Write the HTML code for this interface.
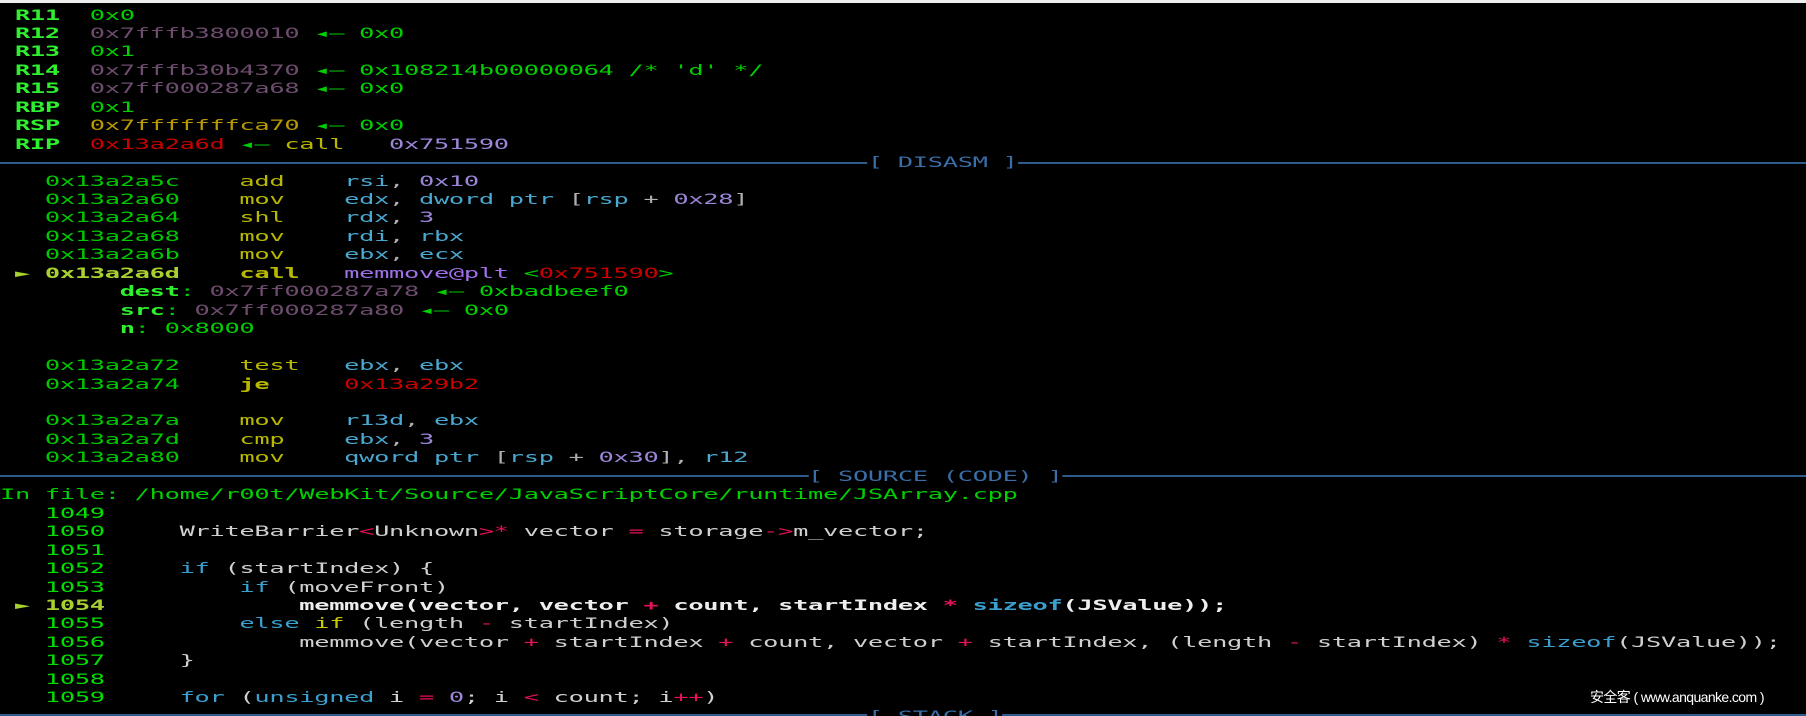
<!DOCTYPE html>
<html><head><meta charset="utf-8"><style>
html,body{margin:0;padding:0;background:#000;width:1806px;height:716px;overflow:hidden;position:relative}
#top{position:absolute;left:0;top:0;width:1806px;height:3px;background:#eeeeee}
.wrap{position:absolute;left:0;top:6.5px;transform:scaleX(1.7735);transform-origin:0 0}
pre{margin:0;font-family:"DejaVu Sans Mono","Liberation Mono",monospace;font-size:14.3px;line-height:18.45px;color:#d0d0d0;white-space:pre;letter-spacing:-0.17px}
.hl{position:absolute;left:0;width:1806px;height:2px;background:#2d5b8c}
.lbl{color:#3a6ea8;background:#000}
b{font-weight:bold}
.rn{color:#2ef02e;font-weight:bold}
.g{color:#00d000}
.pg{color:#6e4c6e}
.y{color:#b89a00}
.r{color:#c80000}
.ol{color:#b8b800}
.pu{color:#9d86d8}
.mp{color:#a070e8}
.bl{color:#4aa8d0}
.gr{color:#b0b0b0}
.ln{color:#00e000}
.ln2{color:#a8d030}
.op{color:#e8105a}
.kw{color:#3aa0d0}
.ky{color:#c8c800}
.ba{color:#00c800}
#wm{position:absolute;left:1590px;top:687px;color:#fff;font-family:"Liberation Sans","Noto Sans CJK SC",sans-serif;font-size:14px;letter-spacing:-0.6px;white-space:nowrap}
</style></head><body>
<div id="top"></div>
<div class="hl" style="top:162px"></div>
<div class="hl" style="top:475px"></div>
<div class="hl" style="top:714px"></div>
<div class="wrap"><pre>
 <span class="rn">R11</span>  <span class="g">0x0</span>
 <span class="rn">R12</span>  <span class="pg">0x7fffb3800010</span> <span class="g">◂— 0x0</span>
 <span class="rn">R13</span>  <span class="g">0x1</span>
 <span class="rn">R14</span>  <span class="pg">0x7fffb30b4370</span> <span class="g">◂— 0x108214b00000064 /* 'd' */</span>
 <span class="rn">R15</span>  <span class="pg">0x7ff000287a68</span> <span class="g">◂— 0x0</span>
 <span class="rn">RBP</span>  <span class="g">0x1</span>
 <span class="rn">RSP</span>  <span class="y">0x7fffffffca70</span> <span class="g">◂— 0x0</span>
 <span class="rn">RIP</span>  <span class="r">0x13a2a6d</span> <span class="g">◂—</span> <span class="ol">call</span>   <span class="pu">0x751590</span>
                                                          <span class="lbl">[ DISASM ]</span>
   <span class="ba">0x13a2a5c</span>    <span class="ol">add</span>    <span class="bl">rsi</span><span class="gr">,</span> <span class="pu">0x10</span>
   <span class="ba">0x13a2a60</span>    <span class="ol">mov</span>    <span class="bl">edx</span><span class="gr">,</span> <span class="bl">dword ptr</span> <span class="gr">[</span><span class="bl">rsp</span> <span class="gr">+</span> <span class="pu">0x28</span><span class="gr">]</span>
   <span class="ba">0x13a2a64</span>    <span class="ol">shl</span>    <span class="bl">rdx</span><span class="gr">,</span> <span class="pu">3</span>
   <span class="ba">0x13a2a68</span>    <span class="ol">mov</span>    <span class="bl">rdi</span><span class="gr">,</span> <span class="bl">rbx</span>
   <span class="ba">0x13a2a6b</span>    <span class="ol">mov</span>    <span class="bl">ebx</span><span class="gr">,</span> <span class="bl">ecx</span>
 <b><span class="ln2">►</span> <span class="ln2">0x13a2a6d</span>    <span class="ol">call</span>   </b><span class="mp">memmove@plt</span> <span class="g">&lt;</span><span class="r">0x751590</span><span class="g">&gt;</span>
        <span class="rn">dest</span><span class="g">:</span> <span class="pg">0x7ff000287a78</span> <span class="g">◂— 0xbadbeef0</span>
        <span class="rn">src</span><span class="g">:</span> <span class="pg">0x7ff000287a80</span> <span class="g">◂— 0x0</span>
        <span class="rn">n</span><span class="g">:</span> <span class="g">0x8000</span>

   <span class="ba">0x13a2a72</span>    <span class="ol">test</span>   <span class="bl">ebx</span><span class="gr">,</span> <span class="bl">ebx</span>
   <span class="ba">0x13a2a74</span>    <b class="ol">je</b>     <span class="r">0x13a29b2</span>

   <span class="ba">0x13a2a7a</span>    <span class="ol">mov</span>    <span class="bl">r13d</span><span class="gr">,</span> <span class="bl">ebx</span>
   <span class="ba">0x13a2a7d</span>    <span class="ol">cmp</span>    <span class="bl">ebx</span><span class="gr">,</span> <span class="pu">3</span>
   <span class="ba">0x13a2a80</span>    <span class="ol">mov</span>    <span class="bl">qword ptr</span> <span class="gr">[</span><span class="bl">rsp</span> <span class="gr">+</span> <span class="pu">0x30</span><span class="gr">]</span><span class="gr">,</span> <span class="bl">r12</span>
                                                      <span class="lbl">[ SOURCE (CODE) ]</span>
<span class="g">In file: /home/r00t/WebKit/Source/JavaScriptCore/runtime/JSArray.cpp</span>
   <span class="ln">1049</span>
   <span class="ln">1050</span>     WriteBarrier<span class="op">&lt;</span>Unknown<span class="op">&gt;*</span> vector <span class="op">=</span> storage<span class="op">-&gt;</span>m_vector;
   <span class="ln">1051</span>
   <span class="ln">1052</span>     <span class="kw">if</span> (startIndex) {
   <span class="ln">1053</span>         <span class="kw">if</span> (moveFront)
 <b><span class="ln2">►</span> <span class="ln2">1054</span>             <span style="color:#eee">memmove(vector, vector </span><span class="op">+</span><span style="color:#eee"> count, startIndex </span><span class="op">*</span> <span class="kw">sizeof</span><span style="color:#eee">(JSValue));</span></b>
   <span class="ln">1055</span>         <span class="kw">else</span> <span class="ky">if</span> (length <span class="op">-</span> startIndex)
   <span class="ln">1056</span>             memmove(vector <span class="op">+</span> startIndex <span class="op">+</span> count, vector <span class="op">+</span> startIndex, (length <span class="op">-</span> startIndex) <span class="op">*</span> <span class="kw">sizeof</span>(JSValue));
   <span class="ln">1057</span>     }
   <span class="ln">1058</span>
   <span class="ln">1059</span>     <span class="kw">for</span> (<span class="kw">unsigned</span> i <span class="op">=</span> <span class="pu">0</span>; i <span class="op">&lt;</span> count; i<span class="op">++</span>)
                                                          <span class="lbl">[ STACK ]</span>
</pre></div>
<div id="wm">安全客 ( www.anquanke.com )</div>
</body></html>
